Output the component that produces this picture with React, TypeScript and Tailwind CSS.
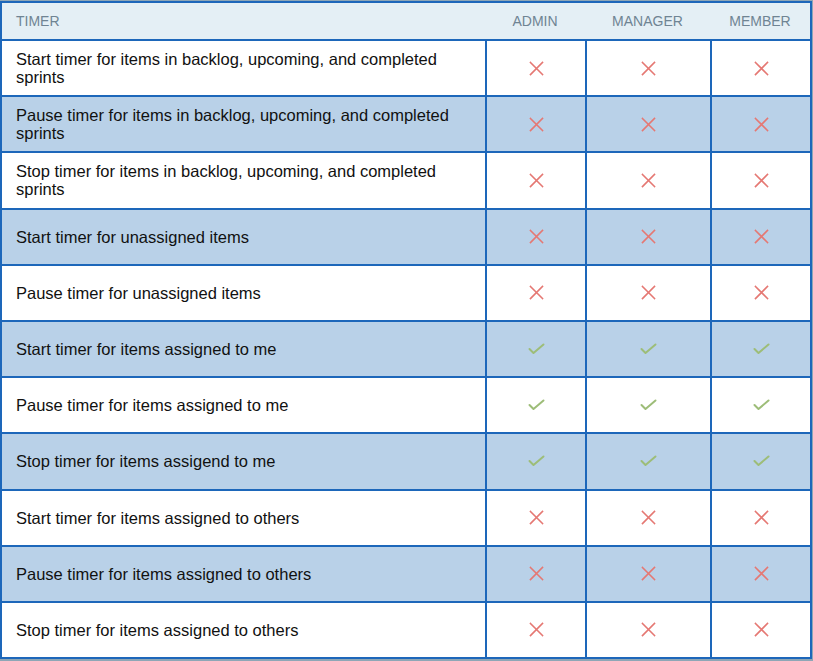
import React from "react";

const rows: { label: string; ok: boolean }[] = [
  { label: "Start timer for items in backlog, upcoming, and completed sprints", ok: false },
  { label: "Pause timer for items in backlog, upcoming, and completed sprints", ok: false },
  { label: "Stop timer for items in backlog, upcoming, and completed sprints", ok: false },
  { label: "Start timer for unassigned items", ok: false },
  { label: "Pause timer for unassigned items", ok: false },
  { label: "Start timer for items assigned to me", ok: true },
  { label: "Pause timer for items assigned to me", ok: true },
  { label: "Stop timer for items assigend to me", ok: true },
  { label: "Start timer for items assigned to others", ok: false },
  { label: "Pause timer for items assigned to others", ok: false },
  { label: "Stop timer for items assigned to others", ok: false },
];

function XIcon() {
  return (
    <svg width="15" height="15" viewBox="0 0 15 15" fill="none">
      <path d="M1.5 1.5 L13.5 13.5 M13.5 1.5 L1.5 13.5" stroke="#e57873" strokeWidth="1.6" strokeLinecap="square" />
    </svg>
  );
}

function CheckIcon() {
  return (
    <svg width="17" height="12" viewBox="0 0 17 12" fill="none">
      <path d="M1.5 6 L5.5 10 L15.5 1.5" stroke="#9dbd78" strokeWidth="2" strokeLinecap="round" strokeLinejoin="round" />
    </svg>
  );
}

export default function App() {
  return (
    <div
      className="w-[813px] h-[661px] bg-[#8ea6b6] pt-[1px]"
      style={{ fontFamily: '"Liberation Sans", Arial, sans-serif' }}
    >
      <div className="w-[812px] h-[658px] border-2 border-[#1d67ba] bg-white flex flex-col">
        <div className="h-[36px] shrink-0 grid grid-cols-[483px_100px_125px_100px] items-center bg-[#e4eff5] text-[14px] text-[#6f8493]">
          <div className="pl-[14px]">TIMER</div>
          <div className="text-center">ADMIN</div>
          <div className="text-center">MANAGER</div>
          <div className="text-center">MEMBER</div>
        </div>
        {rows.map((r, i) => (
          <div
            key={i}
            className={`flex-1 grid grid-cols-[483px_100px_125px_100px] border-t-2 border-[#1d67ba] ${
              i % 2 === 1 ? "bg-[#b9d1e8]" : "bg-white"
            }`}
          >
            <div className="flex items-center pl-[14px] pr-[24px] text-[16.5px] leading-[18px] text-[#111]">
              {r.label}
            </div>
            {[0, 1, 2].map((c) => (
              <div key={c} className="border-l-2 border-[#1d67ba] flex items-center justify-center">
                {r.ok ? <CheckIcon /> : <XIcon />}
              </div>
            ))}
          </div>
        ))}
      </div>
    </div>
  );
}
